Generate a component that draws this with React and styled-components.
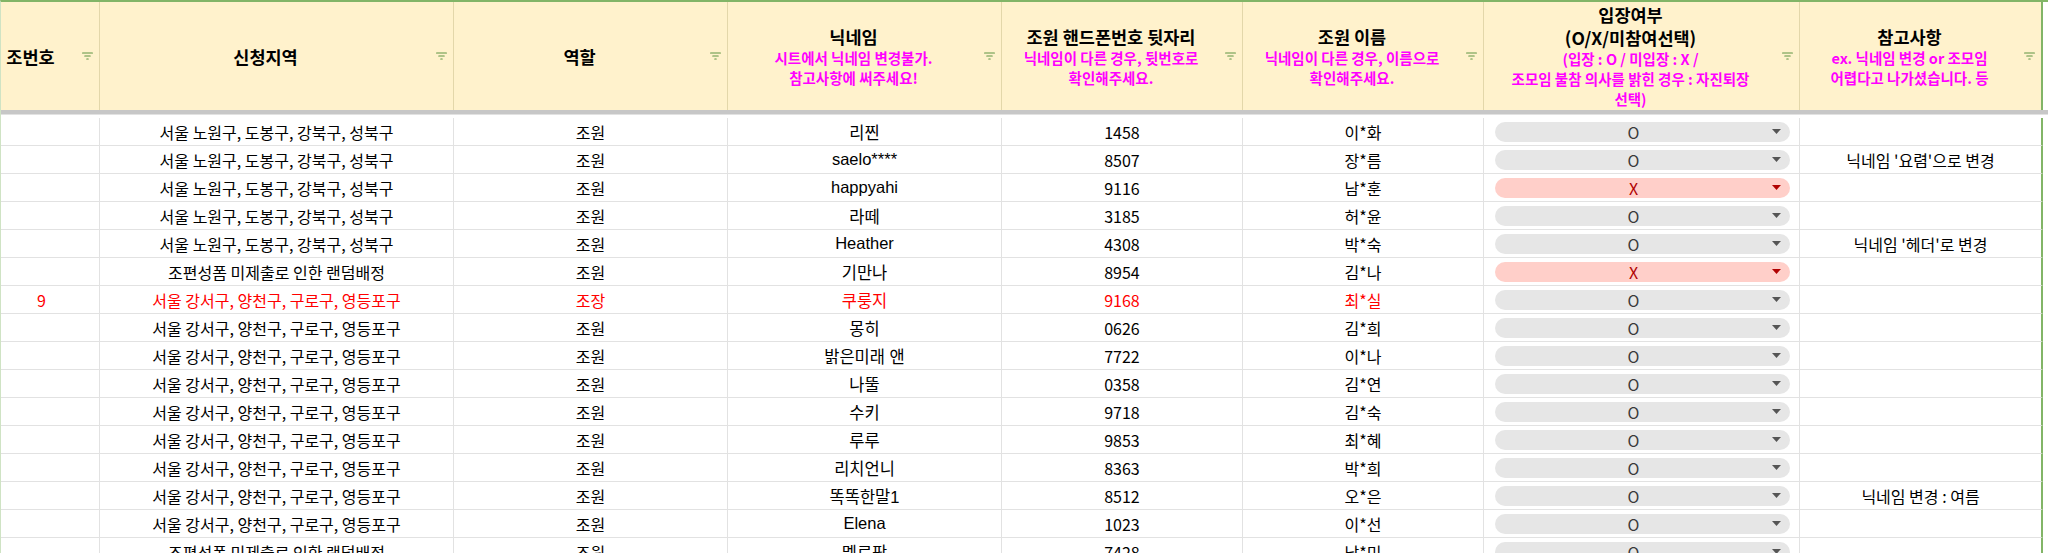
import React from 'react';
import styled, { createGlobalStyle } from 'styled-components';

const GlobalStyle = createGlobalStyle`
  html, body {
    margin: 0;
    padding: 0;
    background: #ffffff;
  }
  body {
    font-family: "Noto Sans CJK KR", "Noto Sans", sans-serif;
  }
`;

// -16px of column A is scrolled out of view on the left
const COLS = '116px 354px 274px 274px 241px 241px 316px 243px 1fr';

const Viewport = styled.div`
  width: 2048px;
  height: 553px;
  overflow: hidden;
  border-top: 2px solid #82b567;
  box-sizing: border-box;
  border-left: 1px solid #cfe3c4;
`;

const Sheet = styled.div`
  margin-left: -17px;
`;

const Row = styled.div`
  display: grid;
  grid-template-columns: ${COLS};
  height: ${(p) => p.$h}px;
`;

const HeadCell = styled.div`
  display: flex;
  align-items: center;
  background: ${(p) => (p.$blank ? '#ffffff' : '#fff2cc')};
  border-right: ${(p) => (p.$last ? '2px solid #82b567' : p.$blank ? 'none' : '1px solid #e3d7aa')};
  box-sizing: border-box;
`;

const HeadText = styled.div`
  flex: 1;
  display: flex;
  flex-direction: column;
  align-items: center;
  justify-content: center;
  align-self: stretch;
  text-align: center;
  white-space: nowrap;
`;

const Title = styled.div`
  font-size: 17.5px;
  font-weight: 700;
  line-height: 23px;
  color: #000000;
`;

const Hint = styled.div`
  font-size: 14.5px;
  font-weight: 700;
  line-height: 20px;
  color: #ff00ff;
`;

const FilterBox = styled.div`
  width: 11px;
  margin: 0 6px 0 5px;
  display: flex;
`;

const FreezeBar = styled.div`
  height: 4px;
  background: #c7c7c7;
  border-bottom: 1px solid #e2e2e2;
  margin-bottom: 3px;
`;

const Cell = styled.div`
  display: flex;
  align-items: center;
  justify-content: center;
  border-right: ${(p) => (p.$last ? '2px solid #82b567' : p.$blank ? 'none' : '1px solid #e2e2e2')};
  border-bottom: ${(p) => (p.$blank ? 'none' : '1px solid #e2e2e2')};
  box-sizing: border-box;
  font-size: 16px;
  font-weight: 400;
  color: ${(p) => (p.$red ? '#ff0000' : '#000000')};
  white-space: nowrap;
  overflow: hidden;
`;

const NickCell = styled(Cell)`
  font-family: "Liberation Sans", "Noto Sans CJK KR", sans-serif;
  font-size: 16.5px;
`;

const ChipCell = styled(Cell)`
  justify-content: flex-start;
  padding-left: 11px;
`;

const Chip = styled.div`
  width: 295px;
  height: 20px;
  border-radius: 10px;
  background: ${(p) => (p.$no ? '#ffcfc9' : '#e6e6e6')};
  color: ${(p) => (p.$no ? '#b10202' : '#3a3a3a')};
  display: flex;
  align-items: center;
`;

const ChipLabel = styled.span`
  flex: 1;
  text-align: center;
  font-size: 16px;
  line-height: 20px;
`;

const Caret = styled.div`
  width: 9px;
  margin-right: 9px;
  display: flex;
`;

const FilterIcon = () => (
  <svg width="11" height="8" viewBox="0 0 11 8">
    <g stroke="#5f9443" strokeWidth="1.2" strokeLinecap="round">
      <line x1="0.6" y1="1" x2="10.4" y2="1" />
      <line x1="2.8" y1="4" x2="8.2" y2="4" />
      <line x1="4.8" y1="7" x2="6.2" y2="7" />
    </g>
  </svg>
);

const CaretIcon = ({ color }) => (
  <svg width="9" height="5" viewBox="0 0 9 5">
    <polygon points="0,0 9,0 4.5,5" fill={color} />
  </svg>
);

const headers = [
  { title: ['조번호'] },
  { title: ['신청지역'] },
  { title: ['역할'] },
  { title: ['닉네임'], hint: ['시트에서 닉네임 변경불가.', '참고사항에 써주세요!'] },
  { title: ['조원 핸드폰번호 뒷자리'], hint: ['닉네임이 다른 경우, 뒷번호로', '확인해주세요.'] },
  { title: ['조원 이름'], hint: ['닉네임이 다른 경우, 이름으로', '확인해주세요.'] },
  {
    title: ['입장여부', '(O/X/미참여선택)'],
    hint: ['(입장 : O / 미입장 : X /', '조모임 불참 의사를 밝힌 경우 : 자진퇴장', '선택)'],
  },
  { title: ['참고사항'], hint: ['ex. 닉네임 변경 or 조모임', '어렵다고 나가셨습니다. 등'] },
];

const NOWON = '서울 노원구, 도봉구, 강북구, 성북구';
const GANGSEO = '서울 강서구, 양천구, 구로구, 영등포구';
const RANDOM = '조편성폼 미제출로 인한 랜덤배정';

const rows = [
  { area: NOWON, role: '조원', nick: '리찐', phone: '1458', name: '이*화', st: 'O' },
  { area: NOWON, role: '조원', nick: 'saelo****', phone: '8507', name: '장*름', st: 'O', note: "닉네임 '요렴'으로 변경" },
  { area: NOWON, role: '조원', nick: 'happyahi', phone: '9116', name: '남*훈', st: 'X' },
  { area: NOWON, role: '조원', nick: '라떼', phone: '3185', name: '허*윤', st: 'O' },
  { area: NOWON, role: '조원', nick: 'Heather', phone: '4308', name: '박*숙', st: 'O', note: "닉네임 '헤더'로 변경" },
  { area: RANDOM, role: '조원', nick: '기만나', phone: '8954', name: '김*나', st: 'X' },
  { no: '9', area: GANGSEO, role: '조장', nick: '쿠룽지', phone: '9168', name: '최*실', st: 'O', red: true },
  { area: GANGSEO, role: '조원', nick: '몽히', phone: '0626', name: '김*희', st: 'O' },
  { area: GANGSEO, role: '조원', nick: '밝은미래 앤', phone: '7722', name: '이*나', st: 'O' },
  { area: GANGSEO, role: '조원', nick: '나뚤', phone: '0358', name: '김*연', st: 'O' },
  { area: GANGSEO, role: '조원', nick: '수키', phone: '9718', name: '김*숙', st: 'O' },
  { area: GANGSEO, role: '조원', nick: '루루', phone: '9853', name: '최*혜', st: 'O' },
  { area: GANGSEO, role: '조원', nick: '리치언니', phone: '8363', name: '박*희', st: 'O' },
  { area: GANGSEO, role: '조원', nick: '똑똑한말1', phone: '8512', name: '오*은', st: 'O', note: '닉네임 변경 : 여름' },
  { area: GANGSEO, role: '조원', nick: 'Elena', phone: '1023', name: '이*선', st: 'O' },
  { area: RANDOM, role: '조원', nick: '멜로팡', phone: '7428', name: '남*미', st: 'O' },
];

const HeaderRow = () => (
  <Row $h={108}>
    {headers.map((h, i) => (
      <HeadCell key={i} $last={i === headers.length - 1}>
        <HeadText>
          {h.title.map((t) => (
            <Title key={t}>{t}</Title>
          ))}
          {(h.hint || []).map((t) => (
            <Hint key={t}>{t}</Hint>
          ))}
        </HeadText>
        <FilterBox>
          <FilterIcon />
        </FilterBox>
      </HeadCell>
    ))}
    <HeadCell $blank />
  </Row>
);

const DataRow = ({ r }) => {
  const no = r.st === 'X';
  return (
    <Row $h={28}>
      <Cell $red={r.red}>{r.no}</Cell>
      <Cell $red={r.red}>{r.area}</Cell>
      <Cell $red={r.red}>{r.role}</Cell>
      <NickCell $red={r.red}>{r.nick}</NickCell>
      <Cell $red={r.red}>{r.phone}</Cell>
      <Cell $red={r.red}>{r.name}</Cell>
      <ChipCell>
        <Chip $no={no}>
          <ChipLabel>{r.st}</ChipLabel>
          <Caret>
            <CaretIcon color={no ? '#b10202' : '#555555'} />
          </Caret>
        </Chip>
      </ChipCell>
      <Cell $last>{r.note}</Cell>
      <Cell $blank />
    </Row>
  );
};

export default function App() {
  return (
    <>
      <GlobalStyle />
      <Viewport>
        <Sheet>
          <HeaderRow />
          <FreezeBar />
          {rows.map((r, i) => (
            <DataRow key={i} r={r} />
          ))}
        </Sheet>
      </Viewport>
    </>
  );
}
